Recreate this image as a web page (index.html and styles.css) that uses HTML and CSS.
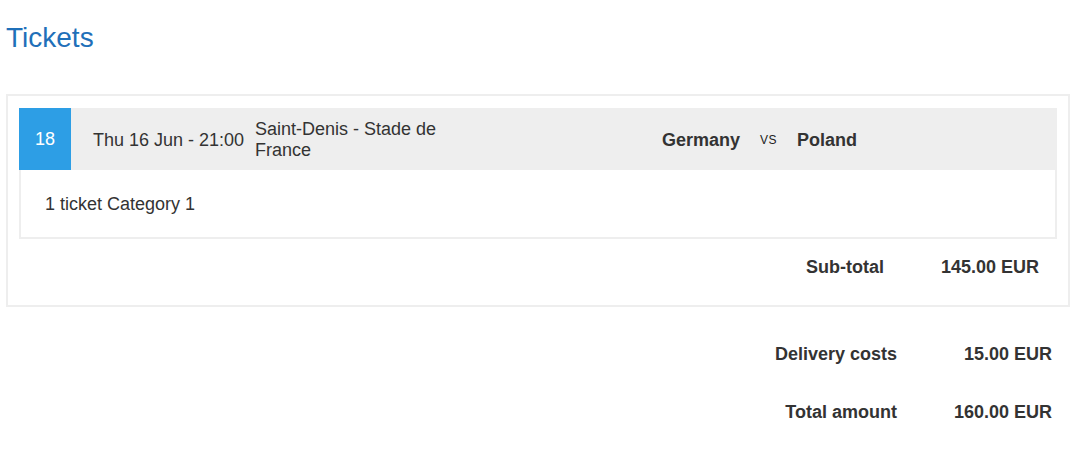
FILE: index.html
```html
<!DOCTYPE html>
<html lang="en">
<head>
<meta charset="utf-8">
<title>Tickets</title>
<link rel="stylesheet" href="styles.css">
</head>
<body>
<div class="page">
  <h1 class="title">Tickets</h1>
  <div class="order">
    <div class="ticket">
      <div class="match">
        <div class="badge">18</div>
        <div class="date">Thu 16 Jun - 21:00</div>
        <div class="venue">Saint-Denis - Stade de France</div>
        <div class="teams">
          <span class="team home">Germany</span>
          <span class="vs">vs</span>
          <span class="team">Poland</span>
        </div>
      </div>
      <div class="ticket-body">1 ticket Category 1</div>
    </div>
    <div class="sum-row subtotal">
      <span class="label">Sub-total</span>
      <span class="value">145.00 EUR</span>
    </div>
  </div>
  <div class="totals">
    <div class="sum-row">
      <span class="label">Delivery costs</span>
      <span class="value">15.00 EUR</span>
    </div>
    <div class="sum-row">
      <span class="label">Total amount</span>
      <span class="value">160.00 EUR</span>
    </div>
  </div>
</div>
</body>
</html>
```

FILE: styles.css
```css
body {
  margin: 0;
  font-family: "Liberation Sans", Arial, Helvetica, sans-serif;
  font-size: 18px;
  color: #333;
  background: #fff;
}

.page {
  padding: 0 8px 0 6px;
}

.title {
  margin: 21px 0 39px;
  font-size: 28px;
  line-height: 34px;
  font-weight: normal;
  color: #1f70b9;
}

.order {
  border: 2px solid #eeeeee;
  padding: 12px 11px 11px;
}

.match {
  display: flex;
  align-items: center;
  box-sizing: border-box;
  height: 62px;
  padding-top: 2px;
  background: #eeeeee;
}

.badge {
  align-self: stretch;
  width: 52px;
  margin-top: -2px;
  display: flex;
  align-items: center;
  justify-content: center;
  background: #2d9ee5;
  color: #fff;
}

.date {
  width: 162px;
  padding-left: 22px;
}

.venue {
  width: 200px;
  line-height: 21.5px;
}

.teams {
  display: flex;
  align-items: center;
  font-weight: bold;
}

.team.home {
  width: 285px;
  text-align: right;
}

.vs {
  margin: 0 20px;
  font-size: 12px;
  font-weight: normal;
  text-transform: uppercase;
  letter-spacing: 0.5px;
  color: #222;
}

.ticket-body {
  border: 2px solid #eeeeee;
  border-top: 0;
  padding: 23px 24px 22px;
  line-height: 22px;
}

.sum-row {
  display: flex;
  justify-content: flex-end;
  padding: 18px 18px 18px 0;
  line-height: 22px;
  font-weight: bold;
}

.sum-row.subtotal {
  padding: 17px 18px 16px 0;
}

.sum-row .label {
  text-align: right;
}

.sum-row .value {
  width: 155px;
  text-align: right;
}

.totals {
  margin-top: 18px;
}
```
